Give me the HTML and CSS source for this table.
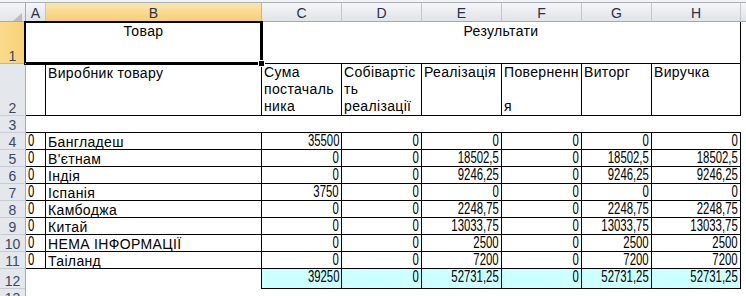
FILE: index.html
```html
<!DOCTYPE html>
<html lang="uk">
<head>
<meta charset="utf-8">
<title>Аркуш</title>
<link rel="stylesheet" href="styles.css">
</head>
<body>
<div class="sheet">
  <div class="topbar"></div>
  <div class="grid">
    <!-- column headers -->
    <div class="corner"></div>
    <div class="hc">A</div>
    <div class="hc sel">B</div>
    <div class="hc">C</div>
    <div class="hc">D</div>
    <div class="hc">E</div>
    <div class="hc">F</div>
    <div class="hc">G</div>
    <div class="hc">H</div>
    <div class="hc last"></div>

    <!-- row 1 -->
    <div class="rh sel">1</div>
    <div class="c center bb br span2">Товар</div>
    <div class="c center bb br span6">Результати</div>
    <div class="c"></div>

    <!-- row 2 -->
    <div class="rh">2</div>
    <div class="c bb br"></div>
    <div class="c bb br">Виробник товару</div>
    <div class="c bb br wrap"><span>Сума</span><span>постачаль</span><span>ника</span></div>
    <div class="c bb br wrap"><span>Собівартіс</span><span>ть</span><span>реалізації</span></div>
    <div class="c bb br wrap"><span>Реалізація</span></div>
    <div class="c bb br wrap"><span>Поверненн</span><span>&nbsp;</span><span>я</span></div>
    <div class="c bb br wrap"><span>Виторг</span></div>
    <div class="c bb br wrap"><span>Виручка</span></div>
    <div class="c"></div>

    <!-- row 3 -->
    <div class="rh">3</div>
    <div class="c bb span8"></div>
    <div class="c"></div>

    <!-- row 4 -->
    <div class="rh">4</div>
    <div class="c bb br numl"><span class="n">0</span></div>
    <div class="c bb br">Бангладеш</div>
    <div class="c bb br num"><span class="n">35500</span></div>
    <div class="c bb br num"><span class="n">0</span></div>
    <div class="c bb br num"><span class="n">0</span></div>
    <div class="c bb br num"><span class="n">0</span></div>
    <div class="c bb br num"><span class="n">0</span></div>
    <div class="c bb br num"><span class="n">0</span></div>
    <div class="c"></div>

    <!-- row 5 -->
    <div class="rh">5</div>
    <div class="c bb br numl"><span class="n">0</span></div>
    <div class="c bb br">В'єтнам</div>
    <div class="c bb br num"><span class="n">0</span></div>
    <div class="c bb br num"><span class="n">0</span></div>
    <div class="c bb br num"><span class="n">18502,5</span></div>
    <div class="c bb br num"><span class="n">0</span></div>
    <div class="c bb br num"><span class="n">18502,5</span></div>
    <div class="c bb br num"><span class="n">18502,5</span></div>
    <div class="c"></div>

    <!-- row 6 -->
    <div class="rh">6</div>
    <div class="c bb br numl"><span class="n">0</span></div>
    <div class="c bb br">Індія</div>
    <div class="c bb br num"><span class="n">0</span></div>
    <div class="c bb br num"><span class="n">0</span></div>
    <div class="c bb br num"><span class="n">9246,25</span></div>
    <div class="c bb br num"><span class="n">0</span></div>
    <div class="c bb br num"><span class="n">9246,25</span></div>
    <div class="c bb br num"><span class="n">9246,25</span></div>
    <div class="c"></div>

    <!-- row 7 -->
    <div class="rh">7</div>
    <div class="c bb br numl"><span class="n">0</span></div>
    <div class="c bb br">Іспанія</div>
    <div class="c bb br num"><span class="n">3750</span></div>
    <div class="c bb br num"><span class="n">0</span></div>
    <div class="c bb br num"><span class="n">0</span></div>
    <div class="c bb br num"><span class="n">0</span></div>
    <div class="c bb br num"><span class="n">0</span></div>
    <div class="c bb br num"><span class="n">0</span></div>
    <div class="c"></div>

    <!-- row 8 -->
    <div class="rh">8</div>
    <div class="c bb br numl"><span class="n">0</span></div>
    <div class="c bb br">Камбоджа</div>
    <div class="c bb br num"><span class="n">0</span></div>
    <div class="c bb br num"><span class="n">0</span></div>
    <div class="c bb br num"><span class="n">2248,75</span></div>
    <div class="c bb br num"><span class="n">0</span></div>
    <div class="c bb br num"><span class="n">2248,75</span></div>
    <div class="c bb br num"><span class="n">2248,75</span></div>
    <div class="c"></div>

    <!-- row 9 -->
    <div class="rh">9</div>
    <div class="c bb br numl"><span class="n">0</span></div>
    <div class="c bb br">Китай</div>
    <div class="c bb br num"><span class="n">0</span></div>
    <div class="c bb br num"><span class="n">0</span></div>
    <div class="c bb br num"><span class="n">13033,75</span></div>
    <div class="c bb br num"><span class="n">0</span></div>
    <div class="c bb br num"><span class="n">13033,75</span></div>
    <div class="c bb br num"><span class="n">13033,75</span></div>
    <div class="c"></div>

    <!-- row 10 -->
    <div class="rh">10</div>
    <div class="c bb br numl"><span class="n">0</span></div>
    <div class="c bb br">НЕМА ІНФОРМАЦІЇ</div>
    <div class="c bb br num"><span class="n">0</span></div>
    <div class="c bb br num"><span class="n">0</span></div>
    <div class="c bb br num"><span class="n">2500</span></div>
    <div class="c bb br num"><span class="n">0</span></div>
    <div class="c bb br num"><span class="n">2500</span></div>
    <div class="c bb br num"><span class="n">2500</span></div>
    <div class="c"></div>

    <!-- row 11 -->
    <div class="rh">11</div>
    <div class="c bb br numl"><span class="n">0</span></div>
    <div class="c bb br">Таіланд</div>
    <div class="c bb br num"><span class="n">0</span></div>
    <div class="c bb br num"><span class="n">0</span></div>
    <div class="c bb br num"><span class="n">7200</span></div>
    <div class="c bb br num"><span class="n">0</span></div>
    <div class="c bb br num"><span class="n">7200</span></div>
    <div class="c bb br num"><span class="n">7200</span></div>
    <div class="c"></div>

    <!-- row 12 -->
    <div class="rh">12</div>
    <div class="c"></div>
    <div class="c br"></div>
    <div class="c bb br num tot"><span class="n">39250</span></div>
    <div class="c bb br num tot"><span class="n">0</span></div>
    <div class="c bb br num tot"><span class="n">52731,25</span></div>
    <div class="c bb br num tot"><span class="n">0</span></div>
    <div class="c bb br num tot"><span class="n">52731,25</span></div>
    <div class="c bb br num tot"><span class="n">52731,25</span></div>
    <div class="c"></div>

    <!-- row 13 -->
    <div class="rh partial">13</div>
    <div class="c span9"></div>
  </div>
  <div class="selection"></div>
  <div class="handle"></div>
</div>
</body>
</html>
```

FILE: styles.css
```css
html, body {
  margin: 0;
  padding: 0;
  background: #ffffff;
}

body {
  font-family: "Liberation Sans", Arial, sans-serif;
}

.sheet {
  position: relative;
  width: 746px;
  height: 296px;
  overflow: hidden;
  background: #ffffff;
}

.topbar {
  height: 2px;
  background: #f2f3f5;
  border-bottom: 1px solid #a9b0b9;
}

.grid {
  display: grid;
  grid-template-columns: 26px 20px 216px 80px 80px 80px 80px 70px 89px 1fr;
  grid-template-rows: 19px 42px 52px 17px repeat(8, 17px) 20px 1fr;
  height: 293px;
}

.grid > div {
  box-sizing: border-box;
  min-width: 0;
  min-height: 0;
  overflow: hidden;
  white-space: nowrap;
}

/* header strip */
.corner {
  position: relative;
  background: linear-gradient(#f3f4f6, #e2e5e9);
  border-right: 1px solid #a3abb5;
  border-bottom: 1px solid #a3abb5;
}

.corner::after {
  content: "";
  position: absolute;
  left: 13px;
  top: 10px;
  width: 9px;
  height: 8px;
  background: #b8bdc4;
  clip-path: polygon(100% 0, 100% 100%, 0 100%);
}

.hc {
  background: linear-gradient(#f5f6f8, #e0e3e7);
  border-right: 1px solid #c0c6ce;
  border-bottom: 1px solid #a3abb5;
  color: #27324a;
  font-size: 14px;
  line-height: 16px;
  padding-top: 2px;
  text-align: center;
}

.hc.sel {
  background: linear-gradient(#fce6ae, #f7cf72);
  border-right-color: #e7b04e;
  border-bottom-color: #e3a43c;
}

.hc.last {
  border-right: none;
}

.rh {
  background: #e4e7ec;
  border-right: 1px solid #a3abb5;
  border-bottom: 1px solid #c6ccd4;
  color: #3a4761;
  font-size: 14px;
  line-height: 13px;
  display: flex;
  align-items: flex-end;
  justify-content: center;
}

.rh.sel {
  background: linear-gradient(90deg, #fbdb8c, #f8d178);
  border-bottom-color: #e9b04a;
}

.rh.partial {
  align-items: flex-start;
  padding-top: 3px;
  border-bottom: none;
}

/* cells */
.c {
  color: #000000;
  font-size: 14px;
  letter-spacing: 0.35px;
  line-height: 16px;
  padding: 1px 2px 0 2px;
  display: flex;
  align-items: flex-start;
}

.br { border-right: 1px solid #000000; }
.bb { border-bottom: 1px solid #000000; }

.center { justify-content: center; }

.span2 { grid-column: span 2; }
.span6 { grid-column: span 6; }
.span8 { grid-column: span 8; }
.span9 { grid-column: span 9; }

.wrap {
  flex-direction: column;
  line-height: 17px;
  padding-top: 0;
}

.num,
.numl {
  font-family: "Liberation Sans", Arial, sans-serif;
  font-size: 16px;
  letter-spacing: 0;
  padding-top: 0;
}

.num {
  justify-content: flex-end;
}

.n {
  display: inline-block;
  transform: scaleX(0.71);
}

.num .n {
  transform-origin: right center;
}

.numl .n {
  transform-origin: left center;
}

.tot {
  background: #ccffff;
}

/* selection of A1:B1 */
.selection {
  position: absolute;
  left: 24px;
  top: 21px;
  width: 239px;
  height: 44px;
  box-sizing: border-box;
  border-left: 2px solid #000000;
  border-top: 2px solid #000000;
  border-right: 3px double #000000;
  border-bottom: 3px double #000000;
}

.handle {
  position: absolute;
  left: 259px;
  top: 61px;
  width: 5px;
  height: 5px;
  background: #000000;
  outline: 1px solid #ffffff;
}
```
